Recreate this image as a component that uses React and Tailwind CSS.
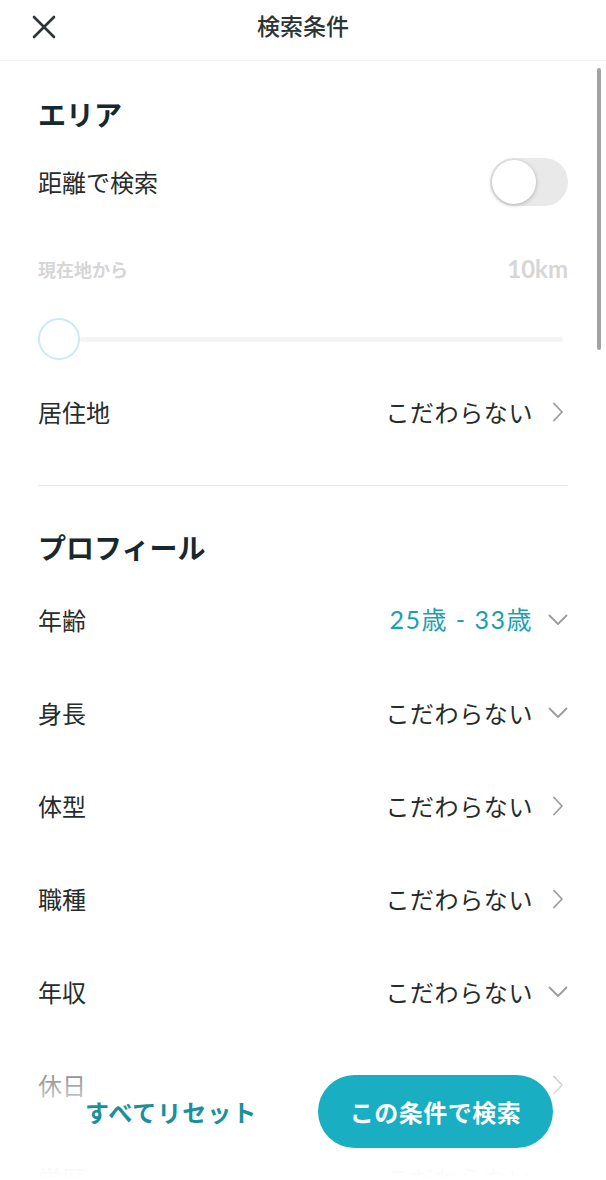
import React, { useState } from 'react';

const ChevronRight = () => (
  <svg width="12" height="20" viewBox="0 0 12 20" fill="none">
    <path d="M2 1.5 L10 10 L2 18.5" stroke="#9c9c9c" strokeWidth="1.8" strokeLinecap="round" strokeLinejoin="round" />
  </svg>
);

const ChevronDown = () => (
  <svg width="20" height="12" viewBox="0 0 20 12" fill="none">
    <path d="M1.5 1.5 L10 10 L18.5 1.5" stroke="#9c9c9c" strokeWidth="1.8" strokeLinecap="round" strokeLinejoin="round" />
  </svg>
);

const rows = [
  { label: '年齢', value: '25歳 - 33歳', icon: 'down', active: true },
  { label: '身長', value: 'こだわらない', icon: 'down' },
  { label: '体型', value: 'こだわらない', icon: 'right' },
  { label: '職種', value: 'こだわらない', icon: 'right' },
  { label: '年収', value: 'こだわらない', icon: 'down' },
  { label: '休日', value: 'こだわらない', icon: 'right' },
  { label: '学歴', value: 'こだわらない', icon: 'down' },
  { label: '喫煙', value: 'こだわらない', icon: 'right' },
];

const Row = ({ label, value, icon, active }) => (
  <div className="h-[93px] flex items-center justify-between">
    <span className="text-[24px] leading-none text-[#262b2c]">{label}</span>
    <div className="flex items-center gap-[15px]">
      {active ? (
        <span className="text-[25px] leading-none text-[#1c9fae] tracking-[1.5px] font-['Lato','Noto_Sans_CJK_JP',sans-serif]">
          {value}
        </span>
      ) : (
        <span className="text-[24px] leading-none text-[#262b2c] tracking-[0.6px]">{value}</span>
      )}
      <div className="w-[20px] flex justify-center">
        {icon === 'down' ? <ChevronDown /> : <ChevronRight />}
      </div>
    </div>
  </div>
);

const App = () => {
  const [byDistance, setByDistance] = useState(false);

  return (
    <div className="h-[1180px] w-full bg-white flex flex-col overflow-hidden font-['Noto_Sans_CJK_JP',sans-serif]">
      {/* Header */}
      <div className="h-[61px] shrink-0 relative flex items-center justify-center border-b border-[#f2f2f2]">
        <button className="absolute left-[30px] top-[13px] w-[28px] h-[28px] flex items-center justify-center">
          <svg width="26" height="26" viewBox="0 0 26 26" fill="none">
            <path d="M3 3 L23 23 M23 3 L3 23" stroke="#2c3436" strokeWidth="2.6" strokeLinecap="round" />
          </svg>
        </button>
        <h1 className="text-[23px] leading-none font-medium text-[#2c3436] -mt-[10px]">検索条件</h1>
      </div>

      <div className="flex-1 relative overflow-hidden">
        <div className="px-[38px]">
          {/* Area */}
          <div className="h-[68px] mt-[19px] flex items-center">
            <h2 className="text-[28px] leading-none font-bold text-[#17292d]">エリア</h2>
          </div>
          <div className="h-[68px] flex items-center justify-between">
            <span className="text-[24px] leading-none text-[#262b2c]">距離で検索</span>
            <button
              onClick={() => setByDistance(!byDistance)}
              className={`w-[78px] h-[48px] rounded-full p-[2px] flex items-center ${byDistance ? 'bg-[#19aec1] justify-end' : 'bg-[#e9e9e9] justify-start'}`}
            >
              <span className="w-[44px] h-[44px] rounded-full bg-white shadow-[0_1px_4px_rgba(0,0,0,0.25)]" />
            </button>
          </div>
          <div className="h-[46px] mt-[30px] flex items-center justify-between">
            <span className="text-[18px] leading-none font-bold text-[#d6d6d6]">現在地から</span>
            <span className="text-[24px] leading-none font-bold text-[#d6d6d6] font-['Lato',sans-serif]">10km</span>
          </div>
          <div className="h-[50px] mt-[22px] flex items-center">
            <div className="w-[42px] h-[42px] rounded-full border-[2px] border-[#c8ecef] bg-white shrink-0" />
            <div className="flex-1 h-[5px] bg-[#f4f4f4] rounded-full mr-[5px]" />
          </div>
          <div className="h-[96px] flex items-center justify-between">
            <span className="text-[24px] leading-none text-[#262b2c]">居住地</span>
            <div className="flex items-center gap-[15px]">
              <span className="text-[24px] leading-none text-[#262b2c] tracking-[0.6px]">こだわらない</span>
              <div className="w-[20px] flex justify-center">
                <ChevronRight />
              </div>
            </div>
          </div>
          <div className="mt-[25px] h-px bg-[#e8e8e8]" />

          {/* Profile */}
          <div className="h-[52px] mt-[35px] flex items-center">
            <h2 className="text-[28px] leading-none font-bold text-[#17292d]">プロフィール</h2>
          </div>
          {rows.map((r) => (
            <Row key={r.label} {...r} />
          ))}
        </div>

        {/* scroll indicator */}
        <div className="absolute right-[5px] top-[7px] w-[4px] h-[282px] rounded-full bg-[#a3a3a3]" />

        {/* Bottom actions */}
        <div className="absolute inset-x-0 bottom-0 h-[150px] bg-gradient-to-b from-white/0 via-white/80 to-white flex items-end pb-[32px]">
          <button className="ml-[85px] text-[24px] leading-none font-bold text-[#1c8f9c] tracking-[1px] mb-[24px]">
            すべてリセット
          </button>
          <button className="ml-auto mr-[53px] w-[235px] h-[73px] rounded-full bg-[#19aec1] text-white text-[24px] font-bold leading-none tracking-[0.5px] flex items-center justify-center">
            この条件で検索
          </button>
        </div>
      </div>
    </div>
  );
};

export default App;
